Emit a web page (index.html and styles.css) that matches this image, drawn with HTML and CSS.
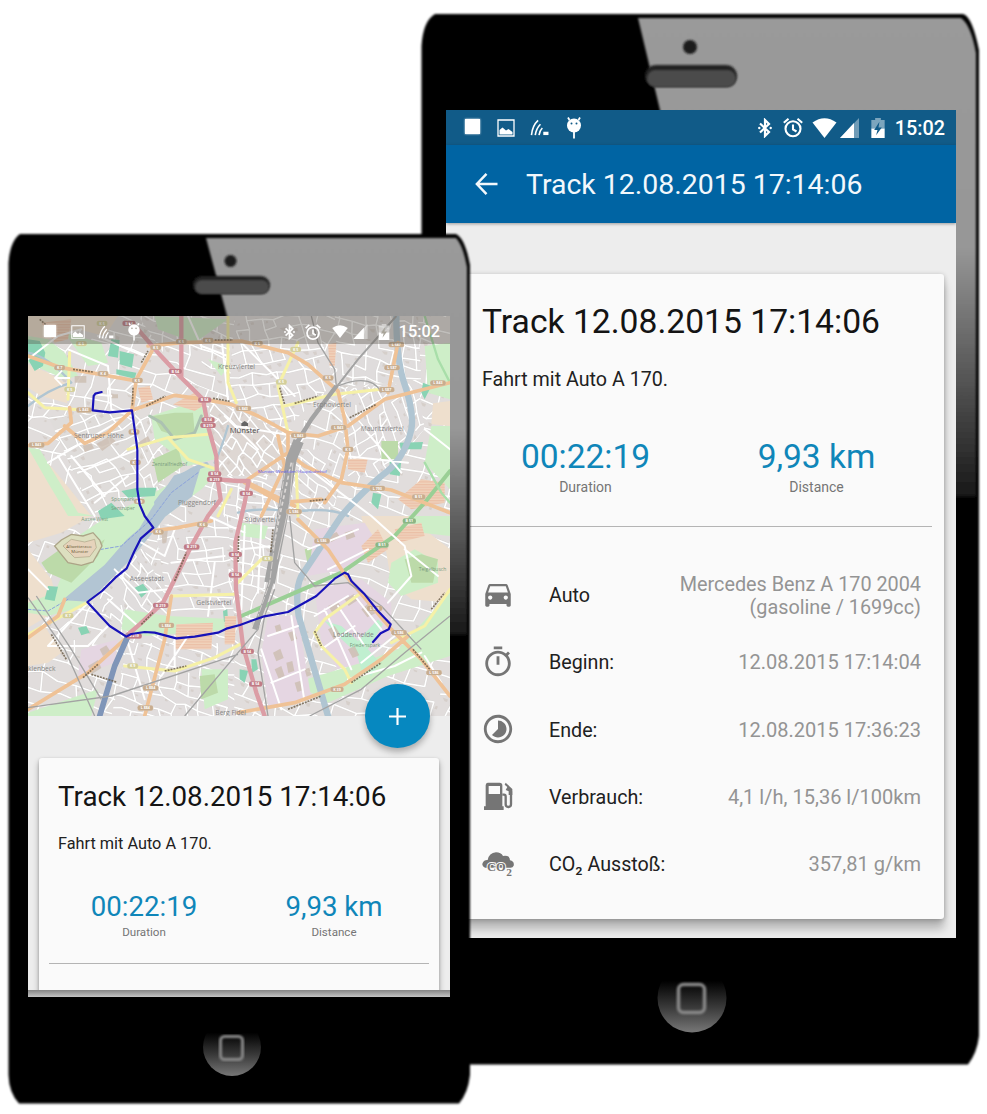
FILE: index.html
```html
<!DOCTYPE html>
<html lang="de">
<head>
<meta charset="utf-8">
<title>Track 12.08.2015 17:14:06</title>
<link rel="stylesheet" href="styles.css">
</head>
<body>
<svg class="defs" width="0" height="0" aria-hidden="true">
  <defs>
    <symbol id="i-image" viewBox="0 0 18 18"><path fill="none" stroke="currentColor" stroke-width="1.3" d="M1 1h16v16H1z"/><path fill="currentColor" d="M2.500 15.500V11l3-2.500 3.500 3 2.500-1.500 4 3v2.500z"/></symbol>
    <symbol id="i-cast" viewBox="0 0 19 18"><g fill="none" stroke="currentColor" stroke-width="1.700"><path d="M1 17Q2 7 8 1.500"/><path d="M5 17Q6 10 10.500 5.500"/><path d="M9 17Q9.500 12.500 12.500 9.500"/></g><path fill="currentColor" d="M13.500 13.500h5.500V17h-5.500z"/></symbol>
    <symbol id="i-droid" viewBox="0 0 16 22"><circle cx="8" cy="8.500" r="7" fill="currentColor"/><path d="M3.500 3 2 .5M12.500 3 14 .5M8 14v7.500" stroke="currentColor" stroke-width="1.800"/><circle class="eye" cx="5.500" cy="6.500" r="1"/><circle class="eye" cx="10.500" cy="6.500" r="1"/></symbol>
    <symbol id="i-bt" viewBox="0 0 14 20"><path d="M2 5.500 11 14 7 18V2L11 6 2 14.500" fill="none" stroke="currentColor" stroke-width="2.200"/><circle cx="1.300" cy="10" r="1.200" fill="currentColor"/><circle cx="12.700" cy="10" r="1.200" fill="currentColor"/></symbol>
    <symbol id="i-alarm" viewBox="0 0 20 20"><g fill="none" stroke="currentColor" stroke-width="2.100"><circle cx="10" cy="11.300" r="7.500"/><path d="M10 7v4.800l3.500 2.200M.8 5.200 5.500 1.200M19.200 5.200l-4.700-4"/></g></symbol>
    <symbol id="i-wifi" viewBox="0 0 24 20"><path fill="currentColor" d="M12 20 0 4.500Q12-4 24 4.500z"/></symbol>
    <symbol id="i-signal" viewBox="0 0 19 20"><path fill="currentColor" opacity=".4" d="M19 0v20H0z"/><path fill="currentColor" d="M14 5v15H0z"/></symbol>
    <symbol id="i-battery" viewBox="0 0 14 21"><path fill="currentColor" opacity=".45" d="M4 0h6v2h4v9H0V2h4z"/><path fill="currentColor" d="M0 11h14v10H0z"/><path class="bolt" d="M8.500 4 3 12.500h3.500L5 18l6-8H7.500z"/></symbol>
    <symbol id="i-back" viewBox="0 0 24 24"><path d="M24 12H2M12 1 1.500 12 12 23" fill="none" stroke="currentColor" stroke-width="2.700"/></symbol>
    <linearGradient id="gloss" x1="0" y1="0" x2="0" y2="1"><stop offset="0" stop-color="#9a9a9a"/><stop offset=".48" stop-color="#979797"/><stop offset=".75" stop-color="#565656"/><stop offset="1" stop-color="#181818"/></linearGradient>
    <linearGradient id="home" x1="0" y1="0" x2="0" y2="1"><stop offset=".25" stop-color="#000"/><stop offset=".65" stop-color="#3c3c3c"/><stop offset="1" stop-color="#777"/></linearGradient>
    <filter id="soft"><feGaussianBlur stdDeviation=".8"/></filter>
  </defs>
</svg>

<main class="stage">
  <section class="phone phone-back">
    <svg class="chassis" viewBox="0 0 558 1051">
      <path filter="url(#soft)" d="M14 1H542Q551 3 558 37V1023Q556 1040 547 1051.500H12Q1 1040 .5 1020V33Q2 8 14 1z"/>
      <path filter="url(#soft)" fill="url(#gloss)" d="M217 5H540Q550 12 555 40V484H300L239 97z"/>
      <circle filter="url(#soft)" cx="269" cy="34" r="7" fill="#1d1d1d"/>
      <rect filter="url(#soft)" x="224" y="52" width="92" height="22" rx="11" fill="#242424"/>
      <rect filter="url(#soft)" x="226" y="57" width="89" height="17" rx="8.500" fill="#4b4b4b"/>
      <circle cx="271" cy="985" r="34.500" fill="url(#home)"/>
      <rect filter="url(#soft)" x="257.500" y="971.500" width="26" height="28" rx="5" fill="none" stroke="#888" stroke-width="3.500"/>
    </svg>
    <div class="screen">
      <header class="status">
        <span class="stop"></span>
        <svg class="s-image"><use href="#i-image"/></svg>
        <svg class="s-cast"><use href="#i-cast"/></svg>
        <svg class="s-droid"><use href="#i-droid"/></svg>
        <span class="grow"></span>
        <svg class="s-bt"><use href="#i-bt"/></svg>
        <svg class="s-alarm"><use href="#i-alarm"/></svg>
        <svg class="s-wifi"><use href="#i-wifi"/></svg>
        <svg class="s-signal"><use href="#i-signal"/></svg>
        <svg class="s-battery"><use href="#i-battery"/></svg>
        <time>15:02</time>
      </header>
      <div class="appbar"><svg><use href="#i-back"/></svg><h1>Track 12.08.2015 17:14:06</h1></div>
      <article class="card">
        <h2>Track 12.08.2015 17:14:06</h2>
        <p class="desc">Fahrt mit Auto A 170.</p>
        <div class="stats">
          <div><b>00:22:19</b><small>Duration</small></div>
          <div><b>9,93 km</b><small>Distance</small></div>
        </div>
        <ul class="rows">
          <li><svg class="car" viewBox="0 0 24 24"><path d="M18.920 6c-.2-.58-.76-1-1.420-1h-11c-.66 0-1.210.42-1.420 1L3 12v8c0 .55.45 1 1 1h1c.55 0 1-.45 1-1v-1h12v1c0 .55.45 1 1 1h1c.55 0 1-.45 1-1v-8l-2.080-6zM6.500 16c-.83 0-1.500-.67-1.500-1.500S5.670 13 6.500 13s1.500.67 1.500 1.500S7.330 16 6.500 16zm11 0c-.83 0-1.500-.67-1.500-1.500s.67-1.500 1.500-1.500 1.500.67 1.500 1.500-.67 1.500-1.500 1.500zM5 11l1.500-4.500h11L19 11H5z"/></svg><span>Auto</span><em class="two">Mercedes Benz A 170 2004<br>(gasoline / 1699cc)</em></li>
          <li><svg viewBox="0 0 24 24"><path d="M15 1H9v2h6V1zm-4 13h2V8h-2v6zm8.030-6.610 1.420-1.420c-.43-.51-.9-.99-1.410-1.410l-1.420 1.420C16.070 4.740 14.120 4 12 4c-4.970 0-9 4.030-9 9s4.020 9 9 9 9-4.030 9-9c0-2.120-.74-4.070-1.970-5.610zM12 20c-3.870 0-7-3.130-7-7s3.130-7 7-7 7 3.130 7 7-3.130 7-7 7z"/></svg><span>Beginn:</span><em>12.08.2015 17:14:04</em></li>
          <li><svg viewBox="0 0 24 24"><path d="M16.240 7.760C15.070 6.590 13.540 6 12 6v6l-4.240 4.240c2.340 2.340 6.140 2.340 8.490 0 2.340-2.340 2.340-6.140-.01-8.480zM12 2C6.480 2 2 6.480 2 12s4.480 10 10 10 10-4.480 10-10S17.520 2 12 2zm0 18c-4.420 0-8-3.580-8-8s3.580-8 8-8 8 3.580 8 8-3.580 8-8 8z"/></svg><span>Ende:</span><em>12.08.2015 17:36:23</em></li>
          <li><svg viewBox="0 0 102 102"><path fill-rule="evenodd" d="M20 8h36q8 0 8 8v63h4v11H9V79h5V16q0-8 6-8zm3 10v24h34V18z"/><path d="M64 44h5q5 0 5 6v23q0 8 8 8t8-8V34" fill="none" stroke="currentColor" stroke-width="7"/><path d="m74 8 20 19v18H83V34l-9-4 5-9-8-7z"/></svg><span>Verbrauch:</span><em>4,1 l/h, 15,36 l/100km</em></li>
          <li><svg viewBox="0 0 102 102"><path d="M12 62Q1 57 5 48q4-10 15-9Q24 18 45 16q15 0 21 11 21-3 21 13 14 3 11 16-3 7-11 6z"/><text class="co2" x="18" y="72" textLength="56" lengthAdjust="spacingAndGlyphs">CO</text><text class="co2 sub" x="76" y="86">2</text></svg><span>CO₂ Ausstoß:</span><em>357,81 g/km</em></li>
        </ul>
      </article>
    </div>
  </section>

  <section class="phone phone-front">
    <svg class="chassis" viewBox="0 0 462 870">
      <path filter="url(#soft)" d="M12 1H448Q457 5 462 32V842Q460 860 451 870.500H11Q1 860 .5 842V30Q2 8 12 1z"/>
      <path filter="url(#soft)" fill="url(#gloss)" d="M198 5H448Q455 12 459 34V402H280L219 83z"/>
      <circle filter="url(#soft)" cx="222.500" cy="28" r="6" fill="#1d1d1d"/>
      <rect filter="url(#soft)" x="185" y="43" width="77" height="18" rx="9" fill="#242424"/>
      <rect filter="url(#soft)" x="187" y="47" width="74" height="14" rx="7" fill="#4b4b4b"/>
      <circle cx="224" cy="814" r="29" fill="url(#home)"/>
      <rect filter="url(#soft)" x="212.500" y="803.500" width="22" height="23" rx="4" fill="none" stroke="#888" stroke-width="3"/>
    </svg>
    <div class="screen">
      <div class="mapbox">
        <svg class="map" viewBox="0 0 1266 1200" preserveAspectRatio="none">
          <rect width="1266" height="1200" fill="#dedbd9"/>
          <g id="streets"></g>
          <g fill="#ecdcc8">
            <path d="M0 0H270L230 60 150 40 60 70 0 60zM0 145 60 170 110 200 118 262 40 240 0 215zM0 395 60 440 110 500 190 600 100 650 0 680zM0 700 70 790 95 880 0 935zM0 960 50 930 100 1010 60 1040 0 1050zM1060 620 1150 610 1266 700V860L1150 850 1090 800zM1215 262 1266 255V330L1210 325z"/>
            <path d="M1000 600 1160 600 1170 690 1090 720 1010 650z"/>
          </g>
          <g fill="#c9edc2">
            <path d="M0 60 60 70 110 110 150 180 110 190 0 140zM110 50 220 80 240 140 180 150zM0 395 35 400 150 590 200 600 120 600 60 500zM370 300 520 250 550 360 560 430 480 450 420 400 380 370z"/>
            <path d="M360 540 540 440 570 470 520 520 400 610 290 745 170 870 60 900 0 890 0 860 80 830 110 760 150 660 240 600z"/>
            <path d="M60 1170 210 1120 190 1200H0V1190zM520 1060 600 1060 600 1150 530 1180zM1140 600 1266 600V660L1180 650zM1090 740 1160 700 1230 740 1230 800 1120 840 1080 800zM1190 90 1266 80V250L1200 230zM1210 330 1266 330V520L1190 440z"/>
            <path d="M800 1100 1000 1040 1110 1000 1266 830V1020L1080 1080 900 1160zM290 880 420 900 620 910 620 940 350 960 280 940zM540 130 600 150 580 180zM640 620 720 630 710 670 640 660zM380 1 600 10 500 80 390 40z"/>
          </g>
          <g fill="#b5d6a0">
            <path d="M375 300 440 290 495 290 500 350 460 365 400 345zM40 740 110 690 160 720 230 670 210 720 130 800 60 770zM375 430 450 395 465 450 390 500zM1130 730 1180 715 1230 730 1215 800 1150 800zM515 1080 560 1075 570 1130 520 1150zM830 700 910 680 890 740 840 750zM1060 375 1110 375 1110 430 1060 430z"/>
          </g>
          <path d="M80 690 100 672 130 655 165 660 195 650 215 672 222 690 195 738 160 748 120 740 100 715z" fill="#d9dcb8" stroke="#a39a7a" stroke-width="4"/>
          <path d="M105 690 130 670 170 678 200 670 205 695 185 722 140 725z" fill="#e4cfb4" stroke="#a39a7a" stroke-width="2"/>
          <g fill="#7ccfac">
            <path d="M0 70 35 75 52 110 45 150 20 165 0 130zM240 120 250 70 275 72 270 125zM275 105 318 115 312 155 275 145zM265 160 325 170 320 188 265 175zM280 525 330 515 385 515 380 540 300 545zM210 585 250 560 290 600 220 610zM60 810 90 812 80 855 50 850zM320 815 345 803 362 825 340 845zM150 935 175 930 185 950 160 958zM585 885 598 880 600 915 588 918zM1115 380 1185 378 1180 400 1118 400zM1085 435 1120 432 1115 480 1085 475zM1035 530 1060 535 1050 580 1030 560zM1185 200 1210 210 1190 250 1180 230zM670 1030 685 1030 690 1060 672 1070zM635 1060 660 1065 650 1100 635 1090z"/>
          </g>
          <g fill="#e2d2df">
            <path d="M860 820 1000 790 1090 860 1090 960 1000 1040 930 1060 880 980zM720 900 810 900 850 1150 720 1170 700 1010zM860 640 1010 620 1060 700 950 760 840 780zM160 1000 270 970 260 1040 150 1080z"/>
          </g>
          <path fill="#b9eecb" d="M890 915 940 930 990 975 1050 910 1065 925 1020 1000 1055 1040 1030 1080 1000 1060 985 1010 930 960z"/>
          <g fill="url(#hatch)">
            <path d="M330 215 365 210 375 250 340 260zM435 265 500 230 540 260 500 285zM445 925 555 920 550 1000 440 1000zM1000 690 1050 640 1080 700 1020 740zM1100 640 1180 620 1190 660 1110 680zM1110 550 1180 490 1250 500 1250 560 1150 580zM960 430 1020 425 1010 470 960 460zM900 85 925 80 920 150 905 150zM590 900 625 900 620 985 590 985zM40 20 130 10 120 70 80 80z"/>
          </g>
          <g fill="#c8b9ac" opacity=".85">
            <path d="M140 180h35v20h-35zM205 385l40-25 18 15-40 30zM165 390l25-8 8 15-28 12zM250 235h20v12h-20zM400 640h20l-5 40h-12zM900 870l30-12 12 20-28 14zM950 850l28-16 12 18-28 18zM1000 880l22-18 20 30-24 12zM735 1010l22-12 10 28-22 10zM740 1060l20-10 10 30-18 8zM775 1040l18-5 6 30-18 6zM780 950l18-6 10 24-18 8zM740 930l16-5 6 20-16 6zM800 1100l18-6 8 28-18 6zM830 1060l14-5 6 22-14 5zM900 940l20-10 20 30-22 12zM960 1000l20-10 14 28-20 8zM180 1050l30-18 10 24-28 18zM215 1000l20-12 12 18-22 14zM330 380l30-20 10 20-30 15zM900 660l26-12 10 16-26 14zM950 650l24-8 8 20-26 10z"/>
          </g>
          <g fill="none" stroke-linecap="round" stroke-linejoin="round">
            <path d="M535 445Q450 470 385 560" stroke="#a9bfce" stroke-width="14"/>
            <path d="M515 455 440 480 375 575 335 640 300 670 230 750 110 850 180 855 240 795 300 735 380 640 410 600 490 540z" fill="#aabfce" stroke="#aabfce" stroke-width="5"/>
            <path d="M510 470 430 530 370 610 280 690 220 700M0 880 60 885 120 850" stroke="#7d97d8" stroke-width="3" stroke-dasharray="9 6"/>
            <path d="M365 300 400 320 440 370 500 350 520 300" stroke="#a3bba9" stroke-width="9"/>
            <path d="M1105 0Q1105 120 1125 190 1160 290 1150 340 1130 430 1060 480 990 540 940 600L820 780Q800 820 812 900 850 1030 900 1200" stroke="#a7bfcd" stroke-width="19"/>
            <path d="M630 590Q720 570 780 590 900 570 960 600M0 270Q60 220 130 200 60 120 0 110M600 330Q580 400 560 440" stroke="#a7bfcd" stroke-width="7"/>
            <path d="M1266 465 1190 560 1100 660 940 770 640 900" stroke="#8fca8a" stroke-width="12"/>
            <path d="M1190 0 1230 130 1266 200M1190 440 1240 530 1266 560" stroke="#9fdba0" stroke-width="7"/>
            <g stroke="#fff" stroke-width="6">
              <path d="M120 100 240 150 250 280 310 300M0 130 90 60 160 40M350 120 300 100 210 60M200 235 250 240M90 420 200 600M130 420 230 540M60 440 300 300M150 470 330 400M200 560 300 480M480 0 520 90 600 120M580 60 600 250M640 80 800 240M620 330 800 360M590 300 690 400M830 450 1030 600 1130 690 1150 780 1080 860M950 420 1140 440M1010 340 1120 470M1130 700 1230 780M1190 340 1266 400M640 700 730 690M650 630 640 880M0 760 60 820M180 860 60 990 180 990 240 930M480 960 400 1080M440 960 440 1060M300 980 350 1150M790 900 830 1160M700 1000 760 1180M890 880 970 1060M1000 1040 1100 960M1190 1020 1240 1100M960 1090 1100 1050 1180 1010M540 600 650 650M560 740 540 900M700 620 690 830M430 740 590 720M260 760 330 830 420 820M240 850 330 930M340 680 410 720 440 640M720 960 810 930M730 1100 830 1060M930 870 1010 990M980 840 1060 940M860 900 960 840M880 1000 980 930M840 700 990 640M900 760 1020 700"/>
            </g>
            <g stroke="#f5f09d" stroke-width="9">
              <path d="M0 230 50 275 190 283M300 400 420 365 540 355M420 365 480 430 560 458M0 955 180 858M290 1050 440 1065 560 1025 636 985M770 270 920 235 1060 220M810 80 750 210 780 350M600 0 600 200 625 260M430 840 620 835M630 800 700 730M1000 830 890 910 860 950 880 990 950 1060 970 1100M1266 820 1190 930 1090 980M125 110 120 250M570 600 610 520M805 470 810 600"/>
            </g>
            <g stroke="#eebb8b" stroke-width="11">
              <path d="M0 120 100 155 200 172 325 195M360 90 460 80 640 75 780 110 840 145 890 190 930 225 950 310 960 400 940 490 890 560M380 90 325 190 312 283M312 283 440 238 530 250 610 265 690 300 780 350 870 360 960 330 1070 250 1266 200M0 388 60 382 130 320 125 275M110 330 170 382 240 350 312 283M780 350 780 410 830 450 940 500 1090 522 1266 590M370 645 450 635 550 615M660 490 780 410M660 500 800 570M0 965 90 900 110 850M0 1180 180 1070 290 970M430 840 410 970 350 1200M630 1190 800 1160 950 1105 1060 1030 1140 960M810 610 900 700 950 775 1090 940 1180 1030 1266 1140M1110 80 1080 230M880 550 760 560 650 500M750 360 770 450 700 600"/>
            </g>
            <g stroke="#d7929b" stroke-width="13">
              <path d="M330 40 390 110 460 185 525 250 540 330 565 420 567 480 578 550 540 600 490 690 405 860 335 925 295 960M460 0V185M567 490 630 495 662 495 650 560 622 680 624 820 645 990 685 1130 710 1200"/>
            </g>
            <path d="M300 960 260 1050 215 1200" stroke="#7189b0" stroke-width="17"/>
            <g stroke="#999" stroke-linecap="butt">
              <path d="M1105 0 990 130 920 220 850 310 805 390" stroke-width="6"/>
              <path d="M925 210 850 310 800 390" stroke-width="13"/>
              <path d="M812 375 790 430 775 520 760 620 740 720 725 800" stroke-width="32"/>
              <path d="M735 780 710 860 680 940" stroke-width="16"/>
              <path d="M790 440 755 600 735 700" stroke="#d8d4d2" stroke-width="5" stroke-dasharray="12 8"/>
              <path d="M795 440 785 560 748 730" stroke="#cfcbc9" stroke-width="3"/>
              <path d="M770 470 745 640 725 800 690 900" stroke="#cfcbc9" stroke-width="3" stroke-dasharray="22 5"/>
              <path d="M700 900 690 940 630 1010M740 820 710 900 690 1010 720 1200M850 0 870 80 920 160 925 210M930 210Q1030 170 1060 230M785 600 800 740 860 810 960 800 1060 870 1180 1000M845 1200 1000 1120 1130 1010 1266 900M0 1175 250 1140 630 1015M0 845 110 1000 200 1200M25 840 130 1000 220 1150M470 1200 630 1010" stroke-width="4"/>
            </g>
            <g stroke="#5a4a32" stroke-width="5" stroke-dasharray="6 3" stroke-linecap="butt" opacity=".8">
              <path d="M135 160 195 168M315 215 313 270M355 270 412 240M340 140 360 105M560 72 615 72M555 247 605 256M800 262 870 240M965 305 1045 265M755 215 770 265M440 795 475 710M340 925 375 890M632 660 630 740M70 955 115 1030M165 1085 210 1045M190 1075 265 1098M410 1065 475 1050M780 1180 880 1140M970 1100 1060 1040M860 945 880 990M1155 1000 1205 1060M845 555 895 550M35 10 70 40M735 640 728 710M1210 880 1250 830"/>
            </g>
          </g>
          <g class="badges" id="badges"></g>
          <g class="places">
            <text x="570" y="160">Kreuzviertel</text><text x="138" y="365">Sentruper Höhe</text><text class="city" x="605" y="350">Münster</text>
            <path d="m640 322 10-7 10 7v8h-20z" fill="#555"/>
            <text class="hbf" x="690" y="470" textLength="206">Münster (Westfalen) Hauptbahnhof</text><text x="855" y="272">Erphoviertel</text><text x="998" y="344">Mauritzviertel</text>
            <text x="450" y="566">Pluggendorf</text><text x="305" y="796">Aaseestadt</text><text x="505" y="867">Geistviertel</text><text x="650" y="618">Südviertel</text>
            <text class="dark" x="115" y="695">Allwetterzoo</text><text class="dark" x="130" y="710">Münster</text><text x="0" y="1066">klenbeck</text><text x="562" y="1196">Berg Fidel</text>
            <text x="915" y="962">Loddenheide</text><text class="green" x="965" y="992">Friedenspark</text><text class="green" x="1172" y="766">Teigelbusch</text><text class="green" x="372" y="450">Zentralfriedhof</text><text class="green" x="160" y="614">Aasee West</text><text class="green" x="250" y="556">Sportpark</text><text class="green" x="250" y="582">Sentruper</text>
          </g>
          <rect width="1266" height="1200" fill="#fff" opacity=".1"/>
          <path class="route" d="M221 228 202 233 197 240 194 283 245 289 312 283 320 340 328 400 328 520 335 565 350 600 376 635 338 668 318 708 296 757 262 785 222 825 178 858 245 930 295 962 310 954 350 948 380 950 445 967 500 962 570 950 595 938 636 927 705 902 780 888 865 840 920 788 950 770 960 775 970 795 1010 835 1050 885 1088 925 1082 940 1058 952 1035 978"/>
          <defs><pattern id="hatch" width="8" height="8" patternUnits="userSpaceOnUse"><rect width="8" height="8" fill="#efcdb4"/><path d="M0 2H8" stroke="#e4a78b" stroke-width="2"/></pattern></defs>
        </svg>
        <header class="status">
          <span class="stop"></span>
          <svg class="s-image"><use href="#i-image"/></svg>
          <svg class="s-cast"><use href="#i-cast"/></svg>
          <svg class="s-droid"><use href="#i-droid"/></svg>
          <span class="grow"></span>
          <svg class="s-bt"><use href="#i-bt"/></svg>
          <svg class="s-alarm"><use href="#i-alarm"/></svg>
          <svg class="s-wifi"><use href="#i-wifi"/></svg>
          <svg class="s-signal"><use href="#i-signal"/></svg>
          <svg class="s-battery"><use href="#i-battery"/></svg>
          <time>15:02</time>
        </header>
        <svg class="mapback"><use href="#i-back"/></svg>
        <button class="fab" aria-label="Add"><svg viewBox="0 0 16 16"><path d="M8 0v16M0 8h16" stroke="#fff" stroke-width="2"/></svg></button>
      </div>
      <article class="card">
        <h2>Track 12.08.2015 17:14:06</h2>
        <p class="desc">Fahrt mit Auto A 170.</p>
        <div class="stats">
          <div><b>00:22:19</b><small>Duration</small></div>
          <div><b>9,93 km</b><small>Distance</small></div>
        </div>
      </article>
      <div class="edge"></div>
    </div>
  </section>
</main>
<script src="map.js"></script>
</body>
</html>
```
FILE: styles.css
```css
* { box-sizing: border-box; }
body { margin: 0; background: #fff; font-family: Roboto, "Liberation Sans", sans-serif; color: #212121; }
h1, h2, p, ul { margin: 0; padding: 0; font-weight: 400; }
svg { display: block; flex: none; }
.defs { position: absolute; }
.stage { position: relative; width: 987px; height: 1114px; overflow: hidden; }

.phone { position: absolute; }
.phone-back { --cutout: #115b88; left: 421px; top: 13px; width: 558px; height: 1051px; padding: 97px 23px 126px 25px; }
.phone-front { --cutout: #a8a499; left: 8px; top: 233px; width: 462px; height: 870px; padding: 83px 20px 106px 20px; }
.chassis { position: absolute; inset: 0; width: 100%; height: 100%; overflow: visible; }
.screen { position: relative; height: 100%; background: #ededed; overflow: hidden; }

.status { display: flex; align-items: center; color: #fff; }
.status .grow { flex: 1; }
.status time { font-weight: 500; }
.stop { background: #fff; box-shadow: 0 0 2px #fff; }
.eye, .bolt { fill: var(--cutout); }

.phone-back .status { height: 35px; padding: 0 11px 0 19px; background: #115b88; }
.phone-back .stop { width: 15px; height: 15px; margin-bottom: 2px; }
.phone-back .s-image { width: 18px; height: 18px; margin-left: 17px; }
.phone-back .s-cast { width: 19px; height: 17px; margin-left: 15px; }
.phone-back .s-droid { width: 16px; height: 22px; margin-left: 17px; }
.phone-back .s-bt { width: 14px; height: 20px; }
.phone-back .s-alarm { width: 20px; height: 21px; margin-left: 11px; }
.phone-back .s-wifi { width: 25px; height: 20px; margin-left: 9px; }
.phone-back .s-signal { width: 19px; height: 20px; margin-left: 3px; }
.phone-back .s-battery { width: 14px; height: 20px; margin-left: 12px; margin-right: 1px; }
.phone-back time { font-size: 19.800px; margin-left: 9px; padding-top: 1px; }

.appbar { display: flex; align-items: center; height: 78px; padding-left: 29px; background: #0064a3; color: #f2f8fc; box-shadow: 0 1px 3px rgba(0,0,0,.35); }
.appbar svg { width: 23px; height: 22px; }
.appbar h1 { margin-left: 28px; padding-top: 2px; font-size: 28.450px; line-height: 34px; white-space: nowrap; }

.card { background: #fafafa; border-radius: 3px; }
.card h2 { color: #141414; white-space: nowrap; }
.stats { display: grid; grid-template-columns: 1fr 1fr; text-align: center; border-bottom: 1.500px solid #b4b4b4; }
.stats b { display: block; font-weight: 400; color: #0f86b9; }
.stats small { display: block; color: #757575; }

.phone-back .card { margin: 51px 12px 0; height: 645px; padding: 28px 12px 0; box-shadow: 0 10px 10px rgba(0,0,0,.24), 0 1px 5px rgba(0,0,0,.25); }
.phone-back h2 { padding-left: 12px; font-size: 33.650px; line-height: 40px; }
.phone-back .desc { margin-top: 26px; padding-left: 12px; font-size: 19.700px; line-height: 24px; }
.phone-back .stats { margin-top: 45px; height: 90px; }
.phone-back .stats b { font-size: 33.500px; line-height: 40px; }
.phone-back .stats small { margin-top: 2px; font-size: 14px; line-height: 16px; }

.rows { list-style: none; margin-top: 34px; }
.rows li { display: flex; align-items: center; height: 67.300px; padding: 0 11px; font-size: 19.700px; }
.rows svg { width: 34px; height: 34px; fill: #757575; color: #757575; }
.rows .car { margin-top: -2px; }
.rows span { margin-left: 34px; padding-top: 2px; }
.rows em { margin-left: auto; padding-top: 2px; font-size: 20.050px; font-style: normal; color: #949494; text-align: right; line-height: 23px; white-space: nowrap; }
.rows .two { font-size: 19.820px; }
.co2 { font: bold 40px "Liberation Serif", serif; fill: #757575; stroke: #fafafa; stroke-width: 6px; paint-order: stroke; }
.co2.sub { font-size: 34px; }

.mapbox { position: relative; height: 400px; }
.map { position: absolute; inset: 0; width: 100%; height: 100%; }
.phone-front .status { position: relative; height: 28px; padding: 3px 10px 0 16px; background: rgba(90,85,75,.38); }
.phone-front .stop { width: 12px; height: 12px; margin-bottom: 2px; }
.phone-front .s-image { width: 14px; height: 14px; margin-left: 15px; }
.phone-front .s-cast { width: 16px; height: 14px; margin-left: 13px; }
.phone-front .s-droid { width: 14px; height: 18px; margin-left: 13px; }
.phone-front .s-bt { width: 11px; height: 16px; }
.phone-front .s-alarm { width: 16px; height: 16px; margin-left: 10px; }
.phone-front .s-wifi { width: 16px; height: 13px; margin-left: 11px; }
.phone-front .s-signal { width: 15px; height: 15px; margin-left: 5px; }
.phone-front .s-battery { width: 12px; height: 16px; margin-left: 10px; }
.phone-front time { font-size: 16.300px; margin-left: 9px; }
.mapback { position: absolute; left: 25px; top: 54px; width: 18px; height: 16px; color: #fff; }
.route { fill: none; stroke: #1712b8; stroke-width: 6.500; stroke-linejoin: round; stroke-linecap: round; }
.places text { font: 20px "Open Sans", sans-serif; fill: #777; }
.places .city { font-size: 23px; fill: #333; }
.places .hbf { font-size: 13px; fill: #4545e8; }
.places .dark { font-size: 13px; fill: #554620; }
.places .green { font-size: 15px; fill: #69906f; }
.badges text { font: bold 11px "Open Sans", sans-serif; fill: #fff; text-anchor: middle; }
.fab { position: absolute; left: 337px; top: 368px; width: 65px; height: 64px; border: 0; padding: 0; border-radius: 50%; background: #0688c0; display: grid; place-items: center; box-shadow: 0 4px 6px rgba(0,0,0,.28); z-index: 2; }
.fab svg { width: 17px; height: 17px; }

.phone-front .card { margin: 42px 11px 0 11px; height: 260px; padding: 23px 10px 0; box-shadow: 0 4px 6px rgba(0,0,0,.3), 0 1px 3px rgba(0,0,0,.2); }
.phone-front h2 { padding-left: 9px; font-size: 27.750px; line-height: 32px; }
.phone-front .desc { margin-top: 21px; padding-left: 9px; font-size: 16.300px; line-height: 20px; }
.phone-front .stats { margin-top: 37px; height: 73px; }
.phone-front .stats b { font-size: 27.600px; line-height: 32px; }
.phone-front .stats small { margin-top: 2px; font-size: 11.600px; line-height: 14px; }
.edge { position: absolute; left: 0; right: 0; bottom: 0; height: 7px; background: linear-gradient(#858585, #c4c4c4); }
```
FILE: map.js
```js
// Minor streets and building blocks: one jittered grid per district.
const NS = "http://www.w3.org/2000/svg";
let seed = 11;
const rnd = () => (seed = (seed * 16807) % 2147483647) / 2147483647;
const add = (parent, name, attrs, text) => {
  const el = document.createElementNS(NS, name);
  for (const k in attrs) el.setAttribute(k, attrs[k]);
  if (text) el.textContent = text;
  return parent.appendChild(el);
};

// [clip polygon, centre x, centre y, reach, angle, cell, tint]
const districts = [
  ["0,0 1266,0 1266,1200 0,1200", 633, 600, 900, 20, 44, "#dedad8"],
  ["60,300 320,290 330,560 200,610", 200, 440, 220, -28, 34, "#dcd8d6"],
  ["330,0 620,0 610,250 460,190", 480, 120, 220, 14, 34, "#dedad9"],
  ["320,280 380,280 480,430 330,560", 400, 400, 180, 60, 30, "#dfdbd8"],
  ["540,250 780,340 770,480 570,480", 660, 380, 180, 40, 26, "#dbd3ce"],
  ["620,0 860,0 920,200 760,350 600,260", 750, 170, 260, -12, 34, "#dedada"],
  ["930,220 1170,200 1190,340 1060,480 960,480", 1060, 330, 220, 62, 30, "#dedada"],
  ["920,0 1170,0 1180,190 930,215", 1050, 100, 200, 6, 33, "#dcd9d8"],
  ["570,490 770,490 740,820 620,820", 670, 650, 240, 8, 31, "#dedada"],
  ["380,630 600,600 620,930 430,930", 510, 770, 240, -8, 36, "#dedada"],
  ["190,860 340,680 420,860 300,950", 300, 820, 180, 40, 28, "#dddada"],
  ["300,980 620,980 620,1200 250,1200", 440, 1090, 220, 12, 34, "#dedada"],
  ["800,400 960,400 920,570 790,600", 870, 500, 150, 30, 28, "#dedada"]
];
const streets = document.getElementById("streets");
districts.forEach(([poly, cx, cy, reach, angle, cell, tint], i) => {
  const clip = add(streets, "clipPath", { id: "d" + i });
  add(clip, "polygon", { points: poly });
  const area = add(streets, "g", { "clip-path": `url(#d${i})` });
  add(area, "polygon", { points: poly, fill: tint });
  const g = add(area, "g", { transform: `translate(${cx} ${cy}) rotate(${angle})` });
  const n = Math.ceil(reach / cell);
  const node = [];
  for (let r = -n; r <= n; r++) {
    node[r] = [];
    for (let c = -n; c <= n; c++) {
      node[r][c] = [c * cell * 1.2 + (rnd() - .5) * cell * .55 + Math.sin(r / 3) * 18, r * cell + (rnd() - .5) * cell * .45 + Math.sin(c / 3) * 18];
    }
  }
  let d = "", blocks = "";
  for (let r = -n; r < n; r++) for (let c = -n; c < n; c++) {
    const p = node[r][c], q = node[r][c + 1], s = node[r + 1][c];
    if (rnd() > .16) d += `M${p[0].toFixed(1)} ${p[1].toFixed(1)}L${q[0].toFixed(1)} ${q[1].toFixed(1)}`;
    if (rnd() > .38) d += `M${p[0].toFixed(1)} ${p[1].toFixed(1)}L${s[0].toFixed(1)} ${s[1].toFixed(1)}`;
    if (rnd() > .5) blocks += `M${(p[0] + 9).toFixed(1)} ${(p[1] + 8).toFixed(1)}h${(5 + rnd() * 14).toFixed(1)}v${(4 + rnd() * 7).toFixed(1)}h-8z`;
  }
  add(g, "path", { d: blocks, fill: "#c9bfb9", opacity: .6 });
  add(g, "path", { d, fill: "none", stroke: "#cecbc9", "stroke-width": 6.5, "stroke-linecap": "round" });
  add(g, "path", { d, fill: "none", stroke: "#fff", "stroke-width": 4.8, "stroke-linecap": "round" });
});

// Road number shields: [x, y, label, fill]
const tan = "#c2a483", red = "#b96c78", grn = "#7fae76", yel = "#cfca8f";
[
  [95, 155, "K 7", tan], [225, 173, "K 4", tan], [328, 193, "K 5", tan], [383, 94, "K 5", tan], [460, 77, "K 5", tan], [540, 73, "K 5", tan],
  [303, 22, "B 54", red], [442, 166, "B 54", red], [530, 252, "B 54", red], [540, 312, "B 54", red], [540, 328, "B 219", red], [560, 474, "B 54", red], [560, 490, "B 219", red],
  [168, 282, "L 843", tan], [26, 387, "L 843", tan], [222, 22, "K 5", yel], [160, 83, "K 5", yel], [125, 220, "K 5", yel], [318, 348, "K 9", tan], [322, 439, "K 9", tan], [334, 556, "K 9", tan],
  [688, 82, "K 5", tan], [803, 100, "K 5", yel], [760, 198, "K 5", yel], [900, 186, "K 5", tan], [1105, 86, "L 587", tan], [1092, 155, "L 587", tan], [1076, 221, "L 587", tan], [1230, 201, "L 843", tan],
  [812, 358, "L 843", tan], [932, 335, "L 843", tan], [960, 400, "K 5", tan], [1048, 517, "L 793", tan], [1172, 543, "B 51", tan], [798, 587, "L 586", tan], [655, 532, "B 54", red], [646, 277, "L 843", tan],
  [523, 626, "K 6", tan], [391, 648, "K 6", tan], [491, 693, "B 219", red], [398, 868, "B 219", red], [318, 960, "B 219", red], [622, 715, "B 54", red], [622, 777, "B 54", red], [658, 1006, "B 54", red], [683, 1104, "B 54", red],
  [120, 899, "K 7", yel], [415, 928, "L 884", tan], [314, 1050, "K 9", yel], [368, 1116, "L 884", tan], [352, 1176, "L 884", tan], [882, 675, "L 586", tan], [1144, 615, "B 51", grn], [1062, 687, "B 51", grn], [1040, 877, "L 586", tan], [1113, 950, "L 586", tan], [927, 1120, "K 39", tan], [1218, 1070, "L 586", tan], [718, 728, "K 9", yel]
].forEach(([x, y, label, fill]) => {
  const g = document.getElementById("badges"), w = label.length * 7 + 12;
  add(g, "rect", { x: x - w / 2, y: y - 8, width: w, height: 16, rx: 6, fill, stroke: "#fff", "stroke-opacity": .35 });
  add(g, "text", { x, y: y + 4 }, label);
});
```
